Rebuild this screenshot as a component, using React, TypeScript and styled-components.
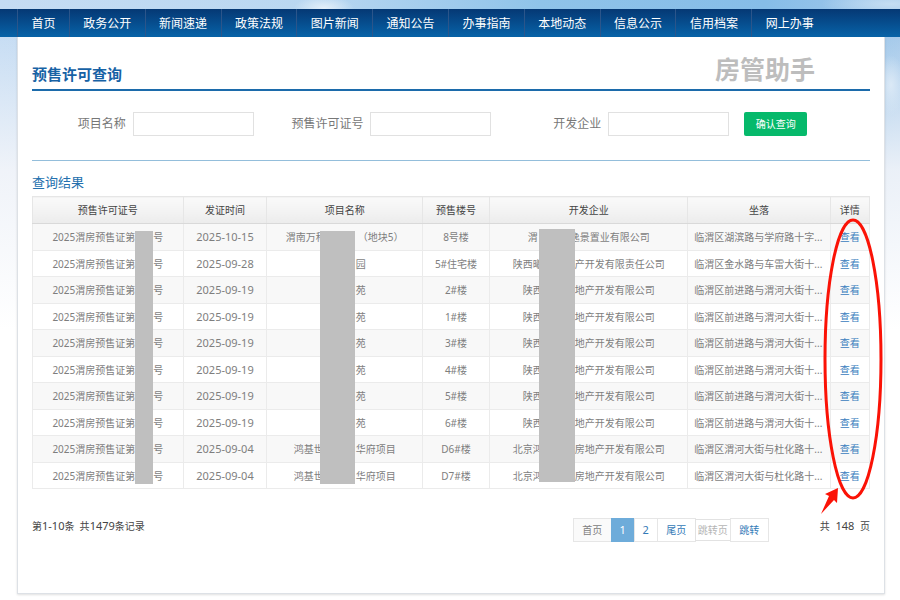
import React from "react";
import styled, { createGlobalStyle } from "styled-components";

const GlobalStyle = createGlobalStyle`
  *, *::before, *::after { box-sizing: border-box; }
  body {
    margin: 0;
    background: #fff;
    color: #444;
    font: 10px/16px "Noto Sans", "Noto Sans CJK SC", sans-serif;
  }
  button, input { font: inherit; }
  a { text-decoration: none; }
`;

const Page = styled.div`
  min-height: 100vh;
  padding: 9px 0 6px;
  background:
    radial-gradient(ellipse 30px 12px at 36% 8px, #e4f0fa, transparent),
    radial-gradient(ellipse 70px 14px at 99% 4px, #c5def3, transparent),
    radial-gradient(ellipse 14px 30px at 99% 85px, #dbe9f6, transparent),
    linear-gradient(180deg, transparent 30px, rgba(247, 247, 250, 0.85) 170px, #fff 330px),
    linear-gradient(90deg, #c5dcf3 0%, #b9d7f1 35%, #8fc3e9 60%, #86bde8 85%, #a4c9ea 100%);
`;

const NavBar = styled.nav`
  padding: 0 15px 0 17px;
  background: linear-gradient(180deg, #053874, #0763a8);
`;

const NavList = styled.ul`
  display: grid;
  grid-template-columns: 52fr repeat(10, 76fr) 58fr;
  margin: 0;
  padding: 0;
  list-style: none;
`;

const NavItem = styled.li`
  border-left: 1px solid #2b558a;
  text-align: center;
`;

const NavLink = styled.a`
  display: block;
  padding-top: 2px;
  color: #fff;
  font-size: 12px;
  line-height: 26px;
  white-space: nowrap;
`;

const Card = styled.main`
  margin: 0 15px 0 17px;
  padding: 17px 14px 51px;
  background: #fff;
  border: 1px solid #dde1e6;
  border-top: 0;
  box-shadow: 0 1px 2px rgba(0, 0, 0, 0.12);
`;

const TitleBar = styled.header`
  display: flex;
  justify-content: space-between;
  padding: 0 55px 3px 0;
  border-bottom: 2px solid #1c6bab;
`;

const Title = styled.h1`
  margin: 8px 0 0;
  color: #1762a5;
  font-size: 15px;
  line-height: 24px;
`;

const Watermark = styled.span`
  color: #bdbdbd;
  font-size: 25px;
  font-weight: 700;
  line-height: 30px;
`;

const SearchForm = styled.form`
  display: grid;
  grid-template-columns: 222fr 238fr 238fr 141fr;
  align-items: center;
  padding: 21px 0 24px;
  border-bottom: 1px solid #94bedb;
`;

const Field = styled.label`
  display: flex;
  justify-content: flex-end;
  align-items: center;
  gap: 7px;
  color: #777;
  font-size: 12px;
  line-height: 24px;
  white-space: nowrap;
`;

const TextBox = styled.input`
  width: 121px;
  height: 24px;
  padding: 0 6px;
  border: 1px solid #e1e1e1;
  background: #fff;
`;

const SubmitButton = styled.button`
  justify-self: start;
  width: 63px;
  height: 24px;
  margin-left: 15px;
  padding: 0;
  border: 0;
  border-radius: 2px;
  background: #06b96b;
  color: #fff;
`;

const ResultTitle = styled.h2`
  margin: 12px 0 4px;
  color: #2470ae;
  font-size: 13px;
  font-weight: 400;
  line-height: 19px;
`;

const TableArea = styled.div`
  position: relative;
`;

const Table = styled.table`
  width: 100%;
  table-layout: fixed;
  border-collapse: collapse;
  color: #7e7e7e;
  text-align: center;
`;

const Col = styled.col<{ $share: number }>`
  width: ${(p) => p.$share}%;
`;

const HeadCell = styled.th`
  height: 27px;
  padding: 0;
  border: 1px solid #e6e6e6;
  border-bottom-color: #d9d9d9;
  background: linear-gradient(180deg, #fafafa, #ececec);
  color: #444;
  font-weight: 400;
`;

const BodyRow = styled.tr`
  height: 26px;
  &:nth-child(odd) {
    height: 27px;
    background: #f8f8f8;
  }
`;

const Cell = styled.td<{ $large?: boolean }>`
  padding: 0;
  border: 1px solid #ebebeb;
  font-size: ${(p) => (p.$large ? 11 : 10)}px;
  white-space: nowrap;
`;

const AddressCell = styled(Cell)`
  padding-left: 6px;
  text-align: left;
`;

const Gap = styled.span<{ $narrow?: boolean }>`
  display: inline-block;
  width: ${(p) => (p.$narrow ? 18 : 32)}px;
`;

const DetailLink = styled.a`
  color: #3a80be;
`;

const Mask = styled.div<{ $left: number; $share: number; $top: number }>`
  position: absolute;
  top: ${(p) => p.$top}px;
  left: ${(p) => p.$left}%;
  width: ${(p) => p.$share}%;
  height: 253px;
  background: #bfbfbf;
`;

const Marker = styled.svg`
  position: absolute;
  top: 20px;
  right: -14px;
  width: 66px;
  height: 300px;
  pointer-events: none;
`;

const Footer = styled.footer`
  display: flex;
  align-items: flex-start;
  justify-content: space-between;
  margin-top: 29px;
`;

const Summary = styled.p`
  margin: 0;
  color: #444;
  white-space: pre;
`;

const Count = styled.span`
  font-size: 11px;
`;

const FooterRight = styled.div`
  display: flex;
  align-items: flex-start;
  gap: 52px;
`;

const Pager = styled.form`
  display: flex;
  align-items: center;
`;

const PageButton = styled.button<{ $active?: boolean; $number?: boolean }>`
  width: ${(p) => (p.$number ? 24 : 39)}px;
  height: 24px;
  margin-right: -1px;
  padding: 0;
  border: 1px solid ${(p) => (p.$active ? "#6eacda" : "#e6e6e6")};
  background: ${(p) => (p.$active ? "#6eacda" : "#fff")};
  color: ${(p) => (p.$active ? "#fff" : "#337ab7")};
  font-size: ${(p) => (p.$number ? 11 : 10)}px;
  &:disabled {
    background: #fafafa;
    color: #808080;
  }
`;

const JumpBox = styled.input`
  width: 36px;
  height: 22px;
  margin-right: -1px;
  padding: 0 2px;
  border: 1px solid #e2e2e2;
  &::placeholder {
    color: #b5b5b5;
    opacity: 1;
  }
`;

const navItems = ["首页", "政务公开", "新闻速递", "政策法规", "图片新闻", "通知公告", "办事指南", "本地动态", "信息公示", "信用档案", "网上办事"];
const fields = ["项目名称", "预售许可证号", "开发企业"];
const shares = [18, 10, 18.6, 8, 23.7, 17, 4.7];
const headings = ["预售许可证号", "发证时间", "项目名称", "预售楼号", "开发企业", "坐落", "详情"];

type Split = [string, string];
interface Permit {
  date: string;
  project: Split;
  building: string;
  company: Split;
  address: string;
}

const garden: Split = ["", "苑"];
const developer: Split = ["陕西", "地产开发有限公司"];
const beijing: Split = ["北京鸿", "房地产开发有限公司"];
const qianjin = "临渭区前进路与渭河大街十...";
const duhua = "临渭区渭河大街与杜化路十...";

const permits: Permit[] = [
  { date: "2025-10-15", project: ["渭南万科", "（地块5）"], building: "8号楼", company: ["渭", "逸景置业有限公司"], address: "临渭区湖滨路与学府路十字..." },
  { date: "2025-09-28", project: ["", "园"], building: "5#住宅楼", company: ["陕西曦", "产开发有限责任公司"], address: "临渭区金水路与车雷大街十..." },
  ...["2#楼", "1#楼", "3#楼", "4#楼", "5#楼", "6#楼"].map((building) => ({
    date: "2025-09-19", project: garden, building, company: developer, address: qianjin,
  })),
  ...["D6#楼", "D7#楼"].map((building) => ({
    date: "2025-09-04", project: ["鸿基世", "华府项目"] as Split, building, company: beijing, address: duhua,
  })),
];

export default function App() {
  return (
    <>
      <GlobalStyle />
      <Page lang="zh-CN">
        <NavBar>
          <NavList>
            {navItems.map((item) => (
              <NavItem key={item}><NavLink href="#">{item}</NavLink></NavItem>
            ))}
          </NavList>
        </NavBar>
        <Card>
          <TitleBar>
            <Title>预售许可查询</Title>
            <Watermark>房管助手</Watermark>
          </TitleBar>
          <SearchForm onSubmit={(e) => e.preventDefault()}>
            {fields.map((name) => (
              <Field key={name}>{name}<TextBox type="text" /></Field>
            ))}
            <SubmitButton type="submit">确认查询</SubmitButton>
          </SearchForm>
          <ResultTitle>查询结果</ResultTitle>
          <TableArea>
            <Table>
              <colgroup>{shares.map((share, i) => <Col key={i} $share={share} />)}</colgroup>
              <thead>
                <tr>{headings.map((h) => <HeadCell key={h} scope="col">{h}</HeadCell>)}</tr>
              </thead>
              <tbody>
                {permits.map((p, i) => (
                  <BodyRow key={i}>
                    <Cell>2025渭房预售证第<Gap $narrow />号</Cell>
                    <Cell $large>{p.date}</Cell>
                    <Cell>{p.project[0]}<Gap />{p.project[1]}</Cell>
                    <Cell>{p.building}</Cell>
                    <Cell>{p.company[0]}<Gap />{p.company[1]}</Cell>
                    <AddressCell>{p.address}</AddressCell>
                    <Cell><DetailLink href="#">查看</DetailLink></Cell>
                  </BodyRow>
                ))}
              </tbody>
            </Table>
            <Mask $left={12.3} $share={2.15} $top={35} />
            <Mask $left={34.4} $share={4.2} $top={35} />
            <Mask $left={60.5} $share={4.3} $top={33} />
            <Marker viewBox="0 0 66 300" aria-hidden="true">
              <ellipse cx="35" cy="143" rx="28" ry="139" fill="none" stroke="#fb1206" strokeWidth="3" />
              <path d="M20 272 L7 278 L11 280 L3 298 L16 284 L19 287 Z" fill="#fb1206" />
            </Marker>
          </TableArea>
          <Footer>
            <Summary>第<Count>1-10</Count>条  共<Count>1479</Count>条记录</Summary>
            <FooterRight>
              <Pager onSubmit={(e) => e.preventDefault()}>
                <PageButton type="button" disabled>首页</PageButton>
                <PageButton type="button" $active $number aria-current="page">1</PageButton>
                <PageButton type="button" $number>2</PageButton>
                <PageButton type="button">尾页</PageButton>
                <JumpBox type="text" placeholder="跳转页" aria-label="跳转页" />
                <PageButton type="submit">跳转</PageButton>
              </Pager>
              <Summary>共<Count>  148  </Count>页</Summary>
            </FooterRight>
          </Footer>
        </Card>
      </Page>
    </>
  );
}
